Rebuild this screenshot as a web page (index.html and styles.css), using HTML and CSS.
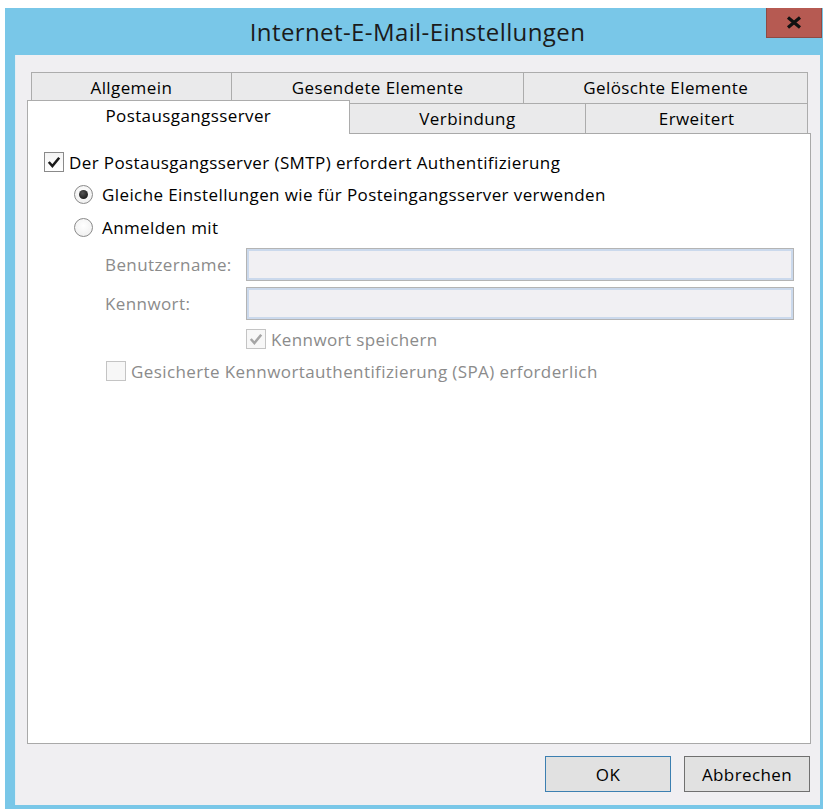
FILE: index.html
```html
<!DOCTYPE html>
<html lang="de">
<head>
<meta charset="utf-8">
<title>Internet-E-Mail-Einstellungen</title>
<link rel="stylesheet" href="styles.css">
</head>
<body>
<div class="window">
  <div class="titlebar">
    <h1 class="title">Internet-E-Mail-Einstellungen</h1>
    <button class="close" type="button" aria-label="Schließen">
      <svg width="16" height="13" viewBox="0 0 16 13"><path d="M2 1.5 L14 11.5 M14 1.5 L2 11.5" stroke="#111" stroke-width="3.2" fill="none"/></svg>
    </button>
  </div>

  <div class="client">
    <div class="tabs">
      <div class="tab-row back">
        <div class="tab tab-allgemein">Allgemein</div>
        <div class="tab tab-gesendet">Gesendete Elemente</div>
        <div class="tab tab-geloescht">Gelöschte Elemente</div>
      </div>
      <div class="tab-row front">
        <div class="tab tab-postausgang selected">Postausgangsserver</div>
        <div class="tab tab-verbindung">Verbindung</div>
        <div class="tab tab-erweitert">Erweitert</div>
      </div>
    </div>

    <div class="panel">
      <div class="opt row-auth">
        <span class="check"><svg viewBox="0 0 20 20"><path d="M4.2 10 L8.2 14.6 L15.8 5.2" /></svg></span>
        <span>Der Postausgangsserver (SMTP) erfordert Authentifizierung</span>
      </div>
      <div class="opt radio-row row-same">
        <span class="radio on"></span>
        <span>Gleiche Einstellungen wie für Posteingangsserver verwenden</span>
      </div>
      <div class="opt radio-row row-login">
        <span class="radio"></span>
        <span>Anmelden mit</span>
      </div>
      <div class="field-row row-user">
        <label class="field-label">Benutzername:</label>
        <span class="input"></span>
      </div>
      <div class="field-row row-pass">
        <label class="field-label">Kennwort:</label>
        <span class="input"></span>
      </div>
      <div class="opt disabled row-save">
        <span class="check"><svg viewBox="0 0 20 20"><path d="M4.2 10 L8.2 14.6 L15.8 5.2" /></svg></span>
        <span>Kennwort speichern</span>
      </div>
      <div class="opt disabled row-spa">
        <span class="check"></span>
        <span>Gesicherte Kennwortauthentifizierung (SPA) erforderlich</span>
      </div>
    </div>

    <div class="buttons">
      <button class="btn default" type="button">OK</button>
      <button class="btn" type="button">Abbrechen</button>
    </div>
  </div>
</div>
</body>
</html>
```

FILE: styles.css
```css
* { box-sizing: border-box; }

html, body {
  margin: 0;
  background: #ffffff;
  overflow: hidden;
}

body {
  font-family: "Open Sans", "Noto Sans", sans-serif;
  font-size: 17px;
  letter-spacing: 0.4px;
  color: #000;
}

/* dialog frame */
.window {
  margin: 8px 0 0 5px;
  width: 825px;
  height: 801px;
  background: #79c7e8;
  display: flex;
  flex-direction: column;
}

.titlebar {
  height: 47px;
  display: grid;
  grid-template-columns: 1fr auto 1fr;
}

.title {
  grid-column: 2;
  margin: 0;
  font-weight: normal;
  font-size: 24px;
  letter-spacing: 0.4px;
  line-height: 47px;
  color: #1b1b1b;
  white-space: nowrap;
}

.close {
  grid-column: 3;
  justify-self: end;
  align-self: start;
  width: 56px;
  height: 30px;
  margin: 0 8px 0 0;
  padding: 0;
  background: #b65a52;
  border: 1px solid #8e4a44;
  border-top: none;
  display: flex;
  align-items: center;
  justify-content: center;
}

.client {
  margin: 0 10px;
  background: #f0eff2;
  padding: 17px 9px 13px 11px;
  border-left: 1px solid #e4eef4;
}

/* tab strip: two rows, the selected tab sits in the front row */
.tabs {
  padding: 0 3px 0 4px;
}

.tab-row {
  display: flex;
  align-items: flex-start;
}

.tab {
  border: 1px solid #acacac;
  border-bottom: none;
  background: #eaeaeb;
  text-align: center;
  white-space: nowrap;
}

.tab + .tab { margin-left: -1px; }

.back .tab {
  height: 31px;
  line-height: 29px;
}

.front { height: 30px; }

.front .tab {
  height: 30px;
  line-height: 29px;
}

.tab-allgemein { width: 201px; }
.tab-gesendet { width: 294px; }
.tab-geloescht { width: 285px; }

.tab-postausgang { width: 323px; margin-left: -4px; }
.tab-verbindung { width: 238px; }
.tab-erweitert { width: 223px; }

.front .tab.selected {
  position: relative;
  z-index: 1;
  height: 34px;
  margin-top: -3px;
  line-height: 30px;
  background: #ffffff;
}

.front .selected + .tab { margin-left: -1px; }

/* page body */
.panel {
  height: 611px;
  background: #ffffff;
  border: 1px solid #a9a9a9;
  padding: 16px 16px 0 16px;
  display: flex;
  flex-direction: column;
  align-items: flex-start;
}

.opt {
  display: flex;
  align-items: center;
  height: 24px;
  gap: 5px;
  white-space: nowrap;
}

.check {
  width: 20px;
  height: 20px;
  flex: none;
  border: 1px solid #8a8a8a;
  background: linear-gradient(#f4f4f4, #ffffff);
  display: flex;
}

.check svg {
  width: 18px;
  height: 18px;
}

.check path {
  fill: none;
  stroke: #1a1a1a;
  stroke-width: 2.8;
  stroke-linejoin: miter;
}

.radio-row {
  margin-left: 30px;
  gap: 9px;
}

.row-same { margin-top: 8px; }
.row-login { margin-top: 9px; }

.radio {
  width: 19px;
  height: 19px;
  flex: none;
  border: 1px solid #8a8a8a;
  border-radius: 50%;
  background: radial-gradient(circle at 50% 40%, #ffffff, #ececec);
  display: flex;
  align-items: center;
  justify-content: center;
}

.radio.on::after {
  content: "";
  width: 9px;
  height: 9px;
  border-radius: 50%;
  background: radial-gradient(circle at 40% 35%, #555, #0a0a0a);
}

.field-row {
  display: flex;
  align-items: center;
  align-self: stretch;
  margin-left: 61px;
}

.row-user { margin-top: 9px; }
.row-pass { margin-top: 6px; }

.field-label {
  width: 141px;
  flex: none;
  color: #8b8b8b;
}

.input {
  flex: 1;
  height: 33px;
  border: 1px solid #b4b4b4;
  box-shadow: inset 0 0 0 2px #cbd9ec;
  background: #f1f0f3;
}

.disabled { color: #8b8b8b; }

.disabled .check {
  border-color: #c4c4c4;
  background: #f7f7f7;
}

.disabled .check path { stroke: #a5a5a5; }

.row-save {
  margin-top: 7px;
  margin-left: 202px;
}

.row-spa {
  margin-top: 8px;
  margin-left: 62px;
}

/* dialog buttons */
.buttons {
  display: flex;
  justify-content: flex-end;
  gap: 13px;
  margin-top: 12px;
  padding-right: 1px;
}

.btn {
  width: 126px;
  height: 36px;
  padding: 0;
  font-family: inherit;
  font-size: 17px;
  letter-spacing: 0.4px;
  color: #000;
  background: #e1e1e1;
  border: 1px solid #707070;
}

.btn.default {
  border-color: #3c7fb1;
}
```
